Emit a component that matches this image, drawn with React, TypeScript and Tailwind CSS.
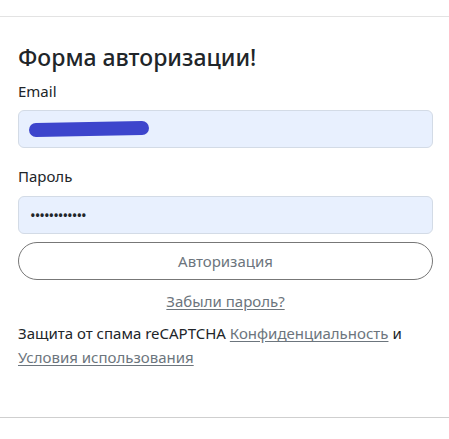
export default function App() {
  return (
    <div className="h-[439px] w-full bg-white pt-4 text-[#212529] [font-family:'Noto_Sans','Open_Sans',sans-serif]">
      <div className="border-t border-[#e3e3e3]" />
      <form className="pl-[18px] pr-[16px] pt-[26px]" onSubmit={event => event.preventDefault()}>
        <h1 className="text-[23px] font-medium leading-[29px]">Форма авторизации!</h1>
        <label className="mt-[7px] block text-[15px] leading-6">Email</label>
        <div className="mt-[7px] flex h-[38px] items-center rounded-md border border-[#d3dbe6] bg-[#e8f0fe] px-[10px]">
          <span className="h-[14px] w-[120px] -rotate-1 rounded-full bg-[#3d45cc]" />
        </div>
        <label className="mt-4 block text-[15px] leading-6">Пароль</label>
        <div className="mt-2 flex h-[38px] items-center rounded-md border border-[#d3dbe6] bg-[#e8f0fe] px-[11px] text-[15px] leading-none tracking-[-1px]">
          ••••••••••••
        </div>
        <button
          type="submit"
          className="mt-2 h-[38px] w-full rounded-full border border-[#777] text-[15px] text-[#6c757d]"
        >
          Авторизация
        </button>
        <div className="mt-[9px] text-center text-[15px] leading-6">
          <a href="#" className="text-[#6c757d] underline underline-offset-2">
            Забыли пароль?
          </a>
        </div>
        <p className="mt-2 text-[15px] leading-6">
          Защита от спама reCAPTCHA{' '}
          <a href="#" className="text-[#6c757d] underline underline-offset-2">
            Конфиденциальность
          </a>{' '}
          и{' '}
          <a href="#" className="text-[#6c757d] underline underline-offset-2">
            Условия использования
          </a>
        </p>
      </form>
      <div className="mt-[48px] border-t border-[#cfcfcf]" />
    </div>
  )
}
